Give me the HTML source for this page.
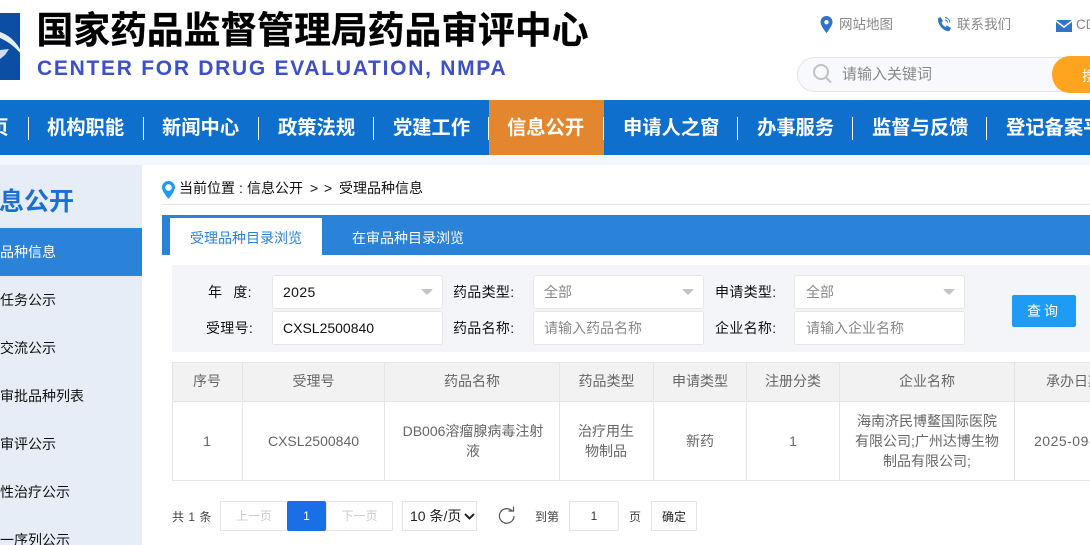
<!DOCTYPE html>
<html lang="zh"><head><meta charset="utf-8"><title>国家药品监督管理局药品审评中心</title>
<style>
html,body{margin:0;padding:0;background:#fff}
#p{position:relative;width:1090px;height:545px;overflow:hidden;background:#fff;font-family:"Liberation Sans","Noto Sans CJK SC",sans-serif;font-size:14px;color:#333}
#p div,#p svg{position:absolute}
.t{white-space:nowrap;line-height:20px}
.c{text-align:center}
.nav{top:117px;height:24px;line-height:24px;color:#fff;font-size:19.300px;font-weight:bold;white-space:nowrap}
.sep{top:117px;width:1px;height:23px;background:#fff}
.side{left:0;width:142px;height:20px;line-height:20px;color:#111;white-space:nowrap}
.inp{background:#fff;border:1px solid #e6e6e6;border-radius:3px;box-sizing:border-box;height:34px;width:171px}
.lab{color:#111;white-space:nowrap;line-height:20px;letter-spacing:.3px}
.tri{width:0;height:0;border-left:6px solid transparent;border-right:6px solid transparent;border-top:6px solid #c4c4c4}
.h{background:#e5e5e5}
.th{top:362px;height:39px;line-height:39px;text-align:center;color:#666;white-space:nowrap}
.td{color:#666;text-align:center;line-height:20px}
.pg{border:1px solid #e5e5e5;box-sizing:border-box;height:30px;line-height:28px;text-align:center;background:#fff;font-size:12px}
</style></head><body><div id="p">

<div style="left:0;top:13px;width:20px;height:67px;background:#0d4ea5"></div>
<svg style="left:0;top:13px" width="26" height="67" viewBox="0 0 26 67"><path d="M0 19 Q12 23 20 36 L25 46 Q14 31 0 25Z" fill="#fff" opacity=".9"/><path d="M0 37 L9 36 L5 42 L0 46Z" fill="#cfdcf0"/></svg>

<div class="t" style="left:36.500px;top:8px;font-size:36.800px;line-height:46px;font-weight:bold;color:#000;-webkit-text-stroke:.3px #000">国家药品监督管理局药品审评中心</div>
<div class="t" style="left:37px;top:57px;font-size:21px;line-height:24px;font-weight:bold;color:#3d50c8;letter-spacing:1.720px">CENTER FOR DRUG EVALUATION, NMPA</div>

<svg style="left:820px;top:16px" width="13" height="17" viewBox="0 0 13 17"><path fill-rule="evenodd" d="M6.500 0C3 0 .5 2.600.5 6c0 4 6 11 6 11s6-7 6-11c0-3.400-2.500-6-6-6zm0 4a2.200 2.200 0 1 1 0 4.400 2.200 2.200 0 0 1 0-4.400z" fill="#2f74c6"/></svg>
<div class="t" style="left:839px;top:15px;font-size:13.500px;color:#888">网站地图</div>
<svg style="left:937px;top:16px" width="15" height="16" viewBox="0 0 15 16"><path d="M1 2.500 3.500 1l2.500 4-1.500 1.500c.5 2 2 3.500 4 4.500L10 9.500l4 2.500-1.500 3C7 16 .5 9 1 2.500z" fill="#2f74c6"/><path d="M8 1.500c2.500.3 4.500 2.300 5 5M8 4c1.300.2 2.300 1.200 2.600 2.500" fill="none" stroke="#2f74c6"/></svg>
<div class="t" style="left:957px;top:15px;font-size:13.500px;color:#888">联系我们</div>
<svg style="left:1056px;top:20px" width="16" height="12" viewBox="0 0 16 12"><path d="M0 0h16L8 6z" fill="#2f74c6"/><path d="M0 2l8 6 8-6v10H0z" fill="#2f74c6"/></svg>
<div class="t" style="left:1076px;top:15px;font-size:13.500px;color:#888">CDE邮箱</div>

<div style="left:797px;top:57px;width:300px;height:35px;box-sizing:border-box;background:#f8f9fd;border:1px solid #e5e5e5;border-radius:18px"></div>
<svg style="left:812px;top:63px" width="21" height="22" viewBox="0 0 21 22"><circle cx="9" cy="9" r="7" fill="none" stroke="#c2c2c2" stroke-width="2"/><path d="M14.500 15l4.500 4.500" stroke="#c2c2c2" stroke-width="2"/></svg>
<div class="t" style="left:842px;top:65px;font-size:15px;color:#888">请输入关键词</div>
<div style="left:1052px;top:56px;width:60px;height:37px;background:#ffa41f;border-radius:18px"></div>
<div class="t" style="left:1082px;top:66px;color:#fff;font-size:14px">搜索</div>

<div style="left:0;top:100px;width:1090px;height:55px;background:#0e6fcd"></div>
<div style="left:0;top:155px;width:1090px;height:10px;background:#f3f7fe"></div>
<div style="left:489px;top:100px;width:115px;height:55px;background:#e3862e"></div>
<div class="nav" style="left:-30px">首页</div>
<div class="nav" style="left:47px">机构职能</div>
<div class="nav" style="left:162px">新闻中心</div>
<div class="nav" style="left:278px">政策法规</div>
<div class="nav" style="left:393px">党建工作</div>
<div class="nav" style="left:507px">信息公开</div>
<div class="nav" style="left:623px">申请人之窗</div>
<div class="nav" style="left:757px">办事服务</div>
<div class="nav" style="left:872px">监督与反馈</div>
<div class="nav" style="left:1006px">登记备案平台</div>
<div class="sep" style="left:28px"></div><div class="sep" style="left:143px"></div><div class="sep" style="left:258px"></div><div class="sep" style="left:373px"></div><div class="sep" style="left:488px"></div><div class="sep" style="left:603px"></div><div class="sep" style="left:737px"></div><div class="sep" style="left:852px"></div><div class="sep" style="left:986px"></div>

<div style="left:0;top:165px;width:142px;height:380px;background:#e7edf6"></div>
<div class="t" style="left:-26px;top:187px;font-size:25px;line-height:30px;font-weight:bold;color:#1a6fd6">信息公开</div>
<div style="left:0;top:228px;width:142px;height:48px;background:#2b82d9"></div>
<div class="side" style="top:242px;color:#fff">品种信息</div>
<div class="side" style="top:290px">任务公示</div>
<div class="side" style="top:338px">交流公示</div>
<div class="side" style="top:386px">审批品种列表</div>
<div class="side" style="top:434px">审评公示</div>
<div class="side" style="top:482px">性治疗公示</div>
<div class="side" style="top:530px">一序列公示</div>

<svg style="left:162px;top:181px" width="13" height="18" viewBox="0 0 13 18"><path fill-rule="evenodd" d="M6.500 0C2.900 0 0 2.900 0 6.500 0 10.500 6.500 18 6.500 18S13 10.500 13 6.500C13 2.900 10.100 0 6.500 0zm0 3.200a3.300 3.300 0 1 1 0 6.600 3.300 3.300 0 0 1 0-6.600z" fill="#1e9bf5"/></svg>
<div class="t" style="left:179px;top:178px;color:#111">当前位置</div>
<div class="t" style="left:239px;top:178px;color:#111">:</div>
<div class="t" style="left:247px;top:178px;color:#111">信息公开</div>
<div class="t" style="left:310px;top:178px;color:#111">&gt;</div>
<div class="t" style="left:324px;top:178px;color:#111">&gt;</div>
<div class="t" style="left:339px;top:178px;color:#111">受理品种信息</div>
<div class="h" style="left:162px;top:204px;width:928px;height:1px"></div>

<div style="left:162px;top:215px;width:928px;height:40px;background:#2b82d9"></div>
<div style="left:170px;top:218px;width:152px;height:37px;background:#fff"></div>
<div class="t c" style="left:170px;top:228px;width:152px;color:#2b82d9;">受理品种目录浏览</div>
<div class="t" style="left:352px;top:228px;color:#fff">在审品种目录浏览</div>

<div style="left:172px;top:265px;width:918px;height:87px;background:#f3f5f9"></div>
<div class="lab" style="left:208px;top:282px;white-space:pre">年<span style="margin-left:11px">度:</span></div>
<div class="lab" style="left:206px;top:318px">受理号:</div>
<div class="inp" style="left:272px;top:275px"></div>
<div class="t" style="left:283px;top:282px;color:#111;letter-spacing:.4px">2025</div>
<div class="tri" style="left:421px;top:289px"></div>
<div class="inp" style="left:272px;top:311px"></div>
<div class="t" style="left:283px;top:318px;color:#111">CXSL2500840</div>

<div class="lab" style="left:453px;top:282px">药品类型:</div>
<div class="lab" style="left:453px;top:318px">药品名称:</div>
<div class="inp" style="left:533px;top:275px"></div>
<div class="t" style="left:544px;top:282px;color:#888">全部</div>
<div class="tri" style="left:682px;top:289px"></div>
<div class="inp" style="left:533px;top:311px"></div>
<div class="t" style="left:544px;top:318px;color:#888">请输入药品名称</div>

<div class="lab" style="left:715px;top:282px">申请类型:</div>
<div class="lab" style="left:715px;top:318px">企业名称:</div>
<div class="inp" style="left:794px;top:275px"></div>
<div class="t" style="left:806px;top:282px;color:#888">全部</div>
<div class="tri" style="left:943px;top:289px"></div>
<div class="inp" style="left:794px;top:311px"></div>
<div class="t" style="left:806px;top:318px;color:#888">请输入企业名称</div>

<div style="left:1012px;top:295px;width:64px;height:32px;background:#1e9bf5;border-radius:2px"></div>
<div class="t c" style="left:1012px;top:301px;width:64px;color:#fff;letter-spacing:3px">查询</div>

<div style="left:172px;top:362px;width:918px;height:39px;background:#f2f2f2"></div>
<div class="h" style="left:172px;top:362px;width:918px;height:1px"></div>
<div class="h" style="left:172px;top:401px;width:918px;height:1px"></div>
<div class="h" style="left:172px;top:480px;width:918px;height:1px"></div>
<div class="h" style="left:172px;top:362px;width:1px;height:119px"></div>
<div class="h" style="left:242px;top:362px;width:1px;height:119px"></div>
<div class="h" style="left:384px;top:362px;width:1px;height:119px"></div>
<div class="h" style="left:559px;top:362px;width:1px;height:119px"></div>
<div class="h" style="left:653px;top:362px;width:1px;height:119px"></div>
<div class="h" style="left:746px;top:362px;width:1px;height:119px"></div>
<div class="h" style="left:839px;top:362px;width:1px;height:119px"></div>
<div class="h" style="left:1014px;top:362px;width:1px;height:119px"></div>

<div class="th" style="left:172px;width:70px">序号</div>
<div class="th" style="left:243px;width:141px">受理号</div>
<div class="th" style="left:385px;width:174px">药品名称</div>
<div class="th" style="left:560px;width:93px">药品类型</div>
<div class="th" style="left:654px;width:92px">申请类型</div>
<div class="th" style="left:747px;width:92px">注册分类</div>
<div class="th" style="left:840px;width:174px">企业名称</div>
<div class="th" style="left:1014px;width:120px">承办日期</div>

<div class="td" style="left:172px;width:70px;top:431px">1</div>
<div class="td" style="left:243px;width:141px;top:431px">CXSL2500840</div>
<div class="td" style="left:400px;width:146px;top:421px">DB006溶瘤腺病毒注射液</div>
<div class="td" style="left:575px;width:62px;top:421px">治疗用生物制品</div>
<div class="td" style="left:654px;width:92px;top:431px">新药</div>
<div class="td" style="left:747px;width:92px;top:431px">1</div>
<div class="td" style="left:854px;width:146px;top:411px">海南济民博鳌国际医院有限公司;广州达博生物制品有限公司;</div>
<div class="t" style="left:1034px;top:431px;color:#666;letter-spacing:.5px">2025-09-26</div>

<div class="t" style="left:172px;top:507px;font-size:12px;color:#444;letter-spacing:.5px;white-space:pre">共 1 条</div>
<div class="pg" style="left:220px;top:501px;width:68px;color:#ccc">上一页</div>
<div class="pg" style="left:326px;top:501px;width:67px;color:#ccc">下一页</div>
<div class="pg" style="left:287px;top:501px;width:39px;background:#1a6fe6;border-color:#1a6fe6;color:#fff;border-radius:2px">1</div>
<div class="pg" style="left:402px;top:501px;width:75px;color:#222;text-align:left;padding-left:7px;font-size:14px;white-space:nowrap">10 条/页</div>
<svg style="left:464px;top:513px" width="11" height="7" viewBox="0 0 11 7"><path d="M1 1l4.500 4.500L10 1" fill="none" stroke="#222" stroke-width="2"/></svg>
<svg style="left:497px;top:506px" width="19" height="19" viewBox="0 0 19 19"><path d="M15.500 5.500A7.300 7.300 0 1 0 17 10" fill="none" stroke="#555" stroke-width="1.200"/><path d="M11.500 5h5V.5" fill="none" stroke="#555" stroke-width="1.200"/></svg>
<div class="t" style="left:535px;top:507px;font-size:12px;color:#444">到第</div>
<div class="pg" style="left:569px;top:501px;width:50px;color:#333">1</div>
<div class="t" style="left:629px;top:507px;font-size:12px;color:#444">页</div>
<div class="pg" style="left:651px;top:501px;width:46px;color:#222;line-height:31px">确定</div>
</div></body></html>
